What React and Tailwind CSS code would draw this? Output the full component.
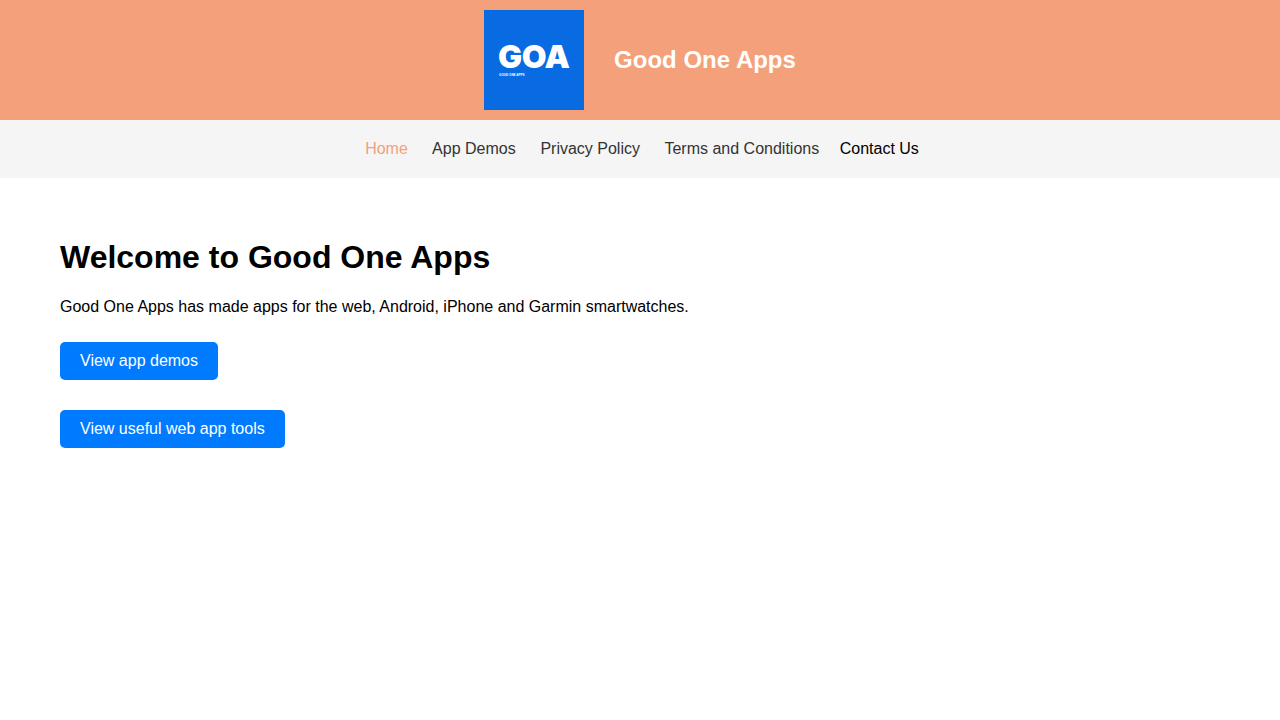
import React from "react";

const Logo = () => (
  <div className="w-[100px] h-[100px] bg-[#086be2] flex flex-col items-center justify-center shrink-0">
    <div className="w-[72px] h-[30px] -mt-[2px] text-white font-black text-[32px] leading-[30px] tracking-[-0.5px] font-['Inter','Liberation_Sans',sans-serif] whitespace-nowrap">
      GOA
    </div>
    <div className="w-[72px] h-[4px] mt-[1px] pl-[1px] text-white font-bold text-[3px] leading-[4px] font-['Liberation_Sans',sans-serif] whitespace-nowrap">
      GOOD ONE APPS
    </div>
  </div>
);

const App = () => {
  return (
    <div className="min-h-screen bg-white font-['Liberation_Sans',Arial,sans-serif] text-black">
      <header className="h-[120px] bg-[#f4a07a] flex items-center justify-center gap-[30px]">
        <Logo />
        <h1 className="text-white text-2xl font-bold">Good One Apps</h1>
      </header>
      <nav className="h-[58px] bg-[#f5f5f5] flex items-center justify-center pl-[4px] text-base">
        <a href="#" className="text-[#f4a07a] mr-[24.3px]">Home</a>
        <a href="#" className="text-[#333333] mr-[24.7px]">App Demos</a>
        <a href="#" className="text-[#333333] mr-[24.5px]">Privacy Policy</a>
        <a href="#" className="text-[#333333] mr-[20.5px]">Terms and Conditions</a>
        <a href="#" className="text-black">Contact Us</a>
      </nav>
      <main className="px-[60px] pt-[61px]">
        <h2 className="text-[32px] leading-[37px] font-bold">Welcome to Good One Apps</h2>
        <p className="mt-[22px] text-base leading-[18px]">
          Good One Apps has made apps for the web, Android, iPhone and Garmin smartwatches.
        </p>
        <div className="mt-[26px] flex flex-col items-start gap-[30px]">
          <a href="#" className="h-[38px] px-5 flex items-center bg-[#007bff] text-white text-base rounded-[5px]">View app demos</a>
          <a href="#" className="h-[38px] px-5 flex items-center bg-[#007bff] text-white text-base rounded-[5px]">View useful web app tools</a>
        </div>
      </main>
    </div>
  );
};

export default App;
